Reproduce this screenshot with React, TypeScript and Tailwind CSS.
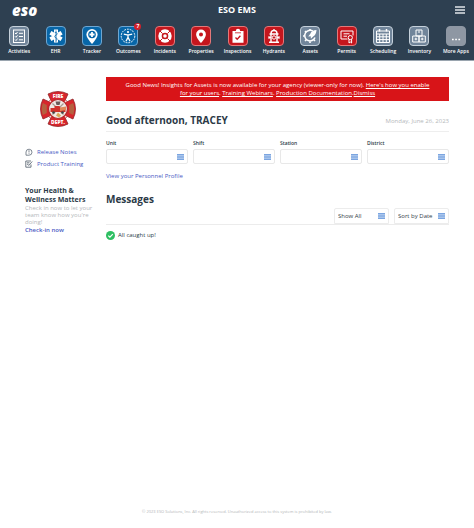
import type { ReactNode } from 'react'

type Tone = 'gray' | 'blue' | 'red' | 'more'

interface AppItem {
  label: string
  tone: Tone
  badge?: string
  icon: ReactNode
}

const TONES: Record<Tone, string> = {
  gray: 'bg-[#71859a] border-[#c5d0da]',
  blue: 'bg-[#0766a8] border-[#6fa6d0]',
  red: 'bg-[#c5161d] border-[#e3787a]',
  more: 'bg-[#8e97a3] border-[#8e97a3]',
}

// All icons are drawn on a 20x20 grid
const APPS: AppItem[] = [
  {
    label: 'Activities',
    tone: 'gray',
    icon: (
      <>
        <rect x="4.5" y="4" width="11" height="12.5" />
        <path d="M6 7l1 1 1.5-2M6 10.3l1 1 1.5-2M6 13.6l1 1 1.5-2M10 7.3h4M10 10.5h4M10 13.8h4" />
      </>
    ),
  },
  {
    label: 'EHR',
    tone: 'blue',
    icon: (
      <>
        <path d="M10 3.5v13M4.4 6.7l11.2 6.6M15.6 6.7L4.4 13.3" strokeWidth="4" />
        <path
          d="M10 4.5v11.5M8.8 6.5c3 0 3 2 1.2 2.6s-1.6 2.3 0 2.8 1.5 2 .3 2.3"
          stroke="#0766a8"
          strokeWidth=".8"
        />
      </>
    ),
  },
  {
    label: 'Tracker',
    tone: 'blue',
    icon: (
      <>
        <path
          fill="#fff"
          stroke="none"
          d="M10 3a5.6 5.6 0 0 0-5.6 5.6C4.4 12.2 10 18 10 18s5.6-5.8 5.6-9.4A5.6 5.6 0 0 0 10 3z"
        />
        <circle cx="10" cy="8.5" r="3.8" fill="#0766a8" stroke="none" />
        <path d="M10 6v5M7.5 8.5h5" strokeWidth="1.8" />
      </>
    ),
  },
  {
    label: 'Outcomes',
    tone: 'blue',
    badge: '7',
    icon: (
      <>
        <circle cx="10" cy="10" r="6.8" strokeDasharray="1.8 1" />
        <circle cx="10" cy="6" r="1.1" fill="#fff" stroke="none" />
        <path d="M5.8 8.2l3.2.6h2l3.2-.6M10 8.8v2.5l-2 4M10 11.3l2 4" strokeWidth="1.3" />
      </>
    ),
  },
  {
    label: 'Incidents',
    tone: 'red',
    icon: (
      <>
        <circle cx="10" cy="10" r="5" strokeWidth="3.4" />
        <circle cx="10" cy="10" r="1.8" fill="#fff" stroke="none" />
        <path
          d="M5 5l2.5 2.5M15 5l-2.5 2.5M5 15l2.5-2.5M15 15l-2.5-2.5"
          stroke="#c5161d"
          strokeWidth="1"
        />
      </>
    ),
  },
  {
    label: 'Properties',
    tone: 'red',
    icon: (
      <path
        fill="#fff"
        stroke="none"
        fillRule="evenodd"
        d="M10 3.5a4.9 4.9 0 0 0-4.9 4.9C5.1 11.8 10 17 10 17s4.9-5.2 4.9-8.6A4.9 4.9 0 0 0 10 3.5zm0 2.9a2 2 0 1 1 0 4 2 2 0 0 1 0-4z"
      />
    ),
  },
  {
    label: 'Inspections',
    tone: 'red',
    icon: (
      <>
        <path fill="#fff" stroke="none" d="M4.5 5h3.3a2.2 2.2 0 0 1 4.4 0h3.3v11.7h-11z" />
        <path d="M7 6.8h6" stroke="#c5161d" strokeWidth=".8" />
        <path d="M7.5 11.5l1.7 1.8 3.2-3.5" stroke="#c5161d" strokeWidth="1.3" />
      </>
    ),
  },
  {
    label: 'Hydrants',
    tone: 'red',
    icon: (
      <>
        <path d="M7 7.5a3 3 0 0 1 6 0M5.5 8h9M7 8.5v7M13 8.5v7M5 16.3h10M10 3v1.5" strokeWidth="1.4" />
        <circle cx="10" cy="11.5" r="1.7" />
        <path d="M5 10.3v2.4M15 10.3v2.4M5 11.5h2M13 11.5h2" strokeWidth="1.3" />
      </>
    ),
  },
  {
    label: 'Assets',
    tone: 'gray',
    icon: (
      <>
        <path d="M13 5.2A5.3 5.3 0 1 0 15 11.5" strokeWidth="1.5" />
        <path
          d="M10 3v1.5M5 5l1.2 1.2M3 10h1.5M5 15l1.2-1.2M10 17v-1.5M15 15l-1.2-1.2"
          strokeWidth="1.6"
        />
        <path
          fill="#fff"
          stroke="none"
          d="M16.5 4c-3 .2-5.5 1.5-6.3 4l-2 2.6 2.5-.3.2 2.5 2.3-2.2c2-1.3 3.2-3.6 3.3-6.6z"
        />
      </>
    ),
  },
  {
    label: 'Permits',
    tone: 'red',
    icon: (
      <>
        <path d="M10.5 13H4V5h12v4.5M6.5 7.8h6M6.5 10.2h3.5" />
        <circle cx="13.3" cy="11.6" r="2.1" />
        <path d="M12 13.3V17l1.3-1 1.3 1v-3.7" />
      </>
    ),
  },
  {
    label: 'Scheduling',
    tone: 'gray',
    icon: (
      <>
        <path d="M3.5 5h13v11.5h-13zM3.5 8h13M6.7 8v8.5M10 8v8.5M13.3 8v8.5M3.5 10.8h13M3.5 13.6h13" />
        <path d="M6.5 3v2.5M13.5 3v2.5" strokeWidth="1.5" />
      </>
    ),
  },
  {
    label: 'Inventory',
    tone: 'gray',
    icon: (
      <>
        <path d="M7 4h6v6H7zM3.7 10h6.3v6H3.7zM10 10h6.3v6H10z" />
        <path d="M10 4.5v2.5M6.9 11.7v2.6M5.6 13h2.6M13.2 11.7v2.6M11.9 13h2.6" />
      </>
    ),
  },
  {
    label: 'More Apps',
    tone: 'more',
    icon: <path d="M6 13.5h1.7M9.2 13.5h1.7M12.4 13.5h1.7" strokeWidth="1.7" />,
  },
]

const FILTERS = ['Unit', 'Shift', 'Station', 'District']

function ListIcon() {
  return (
    <svg viewBox="0 0 7 6" className="pointer-events-none absolute top-1/2 right-1 h-1.5 w-[7px] -translate-y-1/2">
      <rect width="7" height="6" fill="#a9c5ec" />
      <path d="M0 .5h7M0 3h7M0 5.5h7" stroke="#7ba5e0" strokeWidth="1" />
    </svg>
  )
}

function FireDeptLogo() {
  return (
    <svg viewBox="0 0 36 36" className="size-9" role="img" aria-label="Fire Dept.">
      {/* Maltese cross: four flared arms */}
      <path
        d="M8 3Q18-2 28 3L25.5 8.5 27.5 10.5 33 8Q38 18 33 28L27.5 25.5 25.5 27.5 28 33Q18 38 8 33L10.5 27.5 8.5 25.5 3 28Q-2 18 3 8L8.5 10.5 10.5 8.5z"
        fill="#d8262c"
        stroke="#8e2428"
        strokeWidth=".8"
      />
      <path d="M2.8 12q-2 6 0 12l4-2v-8zM33.2 12q2 6 0 12l-4-2v-8z" fill="#b5603f" />
      <path d="M9.5 9.5l17 17M26.5 9.5l-17 17" stroke="#f6ebe6" strokeWidth="1.4" />
      <circle cx="18" cy="18" r="9.5" fill="#f1e9e4" stroke="#b3282c" strokeWidth="1.2" />
      <path d="M12.5 12.5l11 11M23.5 12.5l-11 11" stroke="#a89a90" strokeWidth="1.2" />
      <path d="M10.5 17h4v-2h5l1 2h5v4h-15z" fill="#cf322b" />
      <path d="M15.5 10.5h5l-1 3.5h-3z" fill="#6b5a58" />
      <path d="M16 24.5l2-3 3 3-2 2z" fill="#d8a85a" />
      <path d="M20 16.5l6-1v3.5l-6 1z" fill="#e08a5a" />
      <circle cx="13.5" cy="21.5" r="1.3" fill="#444" />
      <circle cx="22.5" cy="21.5" r="1.3" fill="#444" />
      <g fill="#fff" fontFamily="Open Sans, sans-serif" fontWeight="800" textAnchor="middle">
        <text x="18" y="6.5" fontSize="5">FIRE</text>
        <text x="18" y="33" fontSize="5">DEPT.</text>
      </g>
    </svg>
  )
}

function SmallSelect({ label }: { label: string }) {
  return (
    <div className="relative w-[55px]">
      <select
        aria-label={label}
        className="block h-4 w-full appearance-none rounded-t-xs border border-[#ececec] bg-white pl-[3px] text-[6px] text-[#333d47]"
      >
        <option>{label}</option>
      </select>
      <ListIcon />
    </div>
  )
}

export default function App() {
  return (
    <div className="flex min-h-screen flex-col bg-white font-['Open_Sans',sans-serif] text-[#2c3a47]">
      <header className="border-b border-[#9aa5af] bg-[#2e4051] text-white">
        <div className="grid h-5 grid-cols-3 items-center px-[9px]">
          <span className="pl-[3px] text-[15px] leading-5 font-extrabold italic">eso</span>
          <h1 className="text-center text-[9px] leading-4 font-bold">ESO EMS</h1>
          <button aria-label="Menu" className="justify-self-end">
            <svg viewBox="0 0 10 8" className="h-2 w-2.5">
              <path d="M0 1h10M0 4h10M0 7h10" stroke="#dfe4e8" strokeWidth="1.4" />
            </svg>
          </button>
        </div>
        <nav className="flex pt-1.5 pb-1.5 pl-px">
          {APPS.map((app) => (
            <a key={app.label} href="#" className="flex flex-1 basis-0 flex-col items-center gap-0.5">
              <span className={`relative size-5 rounded-sm border ${TONES[app.tone]}`}>
                <svg viewBox="1 1 18 18" className="size-full" fill="none" stroke="#fff" strokeWidth="1">
                  {app.icon}
                </svg>
                {app.badge && (
                  <span className="absolute -top-1 -right-1 size-[7px] rounded-full bg-[#d3202b] text-center text-[5px] leading-[7px] font-bold">
                    {app.badge}
                  </span>
                )}
              </span>
              <span className="text-[5px] leading-[6px] font-semibold whitespace-nowrap">{app.label}</span>
            </a>
          ))}
        </nav>
      </header>

      <div className="flex flex-1 gap-4 px-[25px] pt-4">
        <aside className="w-[65px] shrink-0 pt-3.5 text-[6px] leading-[8px]">
          <div className="flex justify-center pb-[21px]">
            <FireDeptLogo />
          </div>
          <ul className="space-y-1 text-[#4a5bc4]">
            <li>
              <a href="#" className="flex items-center gap-1">
                <svg viewBox="0 0 8 8" className="size-2" fill="none" stroke="#4b5866" strokeWidth=".7">
                  <path d="M1 7.2V4a3 3 0 1 1 3 3.2zM4 2.2v2.3M4 5.2v.7" />
                </svg>
                Release Notes
              </a>
            </li>
            <li>
              <a href="#" className="flex items-center gap-1">
                <svg viewBox="0 0 8 8" className="size-2" fill="none" stroke="#4b5866" strokeWidth=".8">
                  <path d="M6 4.5v2.7H.8V1H6M2 2.8h2.5M2 4.3h1.5M3.5 5.8L7.2 1.5" />
                </svg>
                Product Training
              </a>
            </li>
          </ul>
          <h2 className="pt-[18px] pb-px text-[7px] leading-[9px] font-bold whitespace-nowrap">
            Your Health &<br />
            Wellness Matters
          </h2>
          <p className="leading-[7px] whitespace-nowrap text-[#b5b8bb]">
            Check in now to let your
            <br />
            team know how you're
            <br />
            doing!
          </p>
          <a href="#" className="font-semibold text-[#4a5bc4]">
            Check-in now
          </a>
        </aside>

        <main className="min-w-0 flex-1">
          <div className="bg-[#d81418] px-4 py-1 text-center text-[6px] leading-[8px] text-white">
            Good News! Insights for Assets is now available for your agency (viewer-only for now).{' '}
            <a href="#" className="underline">
              Here's how you enable
              <br />
              for your users
            </a>
            .{' '}
            <a href="#" className="underline">Training Webinars</a>.{' '}
            <a href="#" className="underline">Production Documentation</a>.
            <button className="underline">Dismiss</button>
          </div>

          <div className="flex items-center justify-between border-b border-[#eeeeee] pt-3 pb-1">
            <h2 className="text-[10px] leading-[14px] font-bold">Good afternoon, TRACEY</h2>
            <time className="pt-0.5 text-[6px] leading-[8px] text-[#b5b8bb]">Monday, June 26, 2023</time>
          </div>

          <div className="grid grid-cols-4 gap-[5px] pt-[7px]">
            {FILTERS.map((name) => (
              <label key={name} className="text-[5px] leading-[8px] font-semibold">
                {name}
                <span className="relative mt-0.5 block">
                  <select className="block h-[15px] w-full appearance-none rounded-xs border border-[#e8e8e8] bg-white pl-1" />
                  <ListIcon />
                </span>
              </label>
            ))}
          </div>
          <a href="#" className="mt-2 block text-[6px] leading-[8px] text-[#4a5bc4]">
            View your Personnel Profile
          </a>

          <h2 className="pt-3 text-[10px] leading-[14px] font-bold">Messages</h2>
          <div className="flex justify-end gap-[5px] border-b border-[#ececec] pt-0.5">
            <SmallSelect label="Show All" />
            <SmallSelect label="Sort by Date" />
          </div>
          <p className="flex items-center gap-[3px] pt-1.5 text-[6px] leading-[9px]">
            <svg viewBox="0 0 9 9" className="size-[9px]">
              <circle cx="4.5" cy="4.5" r="4.5" fill="#2fbf62" />
              <path d="M2.3 4.6l1.6 1.6 2.9-3" fill="none" stroke="#fff" strokeWidth="1.2" />
            </svg>
            All caught up!
          </p>
        </main>
      </div>

      <footer className="pb-3 text-center text-[4px] leading-[8px] text-[#b3b5b7]">
        © 2023 ESO Solutions, Inc. All rights reserved. Unauthorized access to this system is prohibited by law.
      </footer>
    </div>
  )
}
